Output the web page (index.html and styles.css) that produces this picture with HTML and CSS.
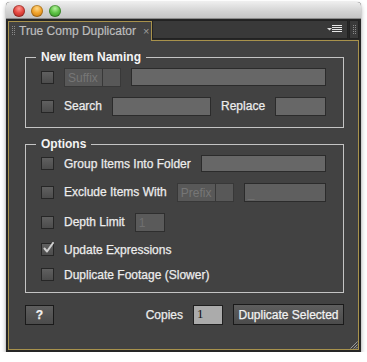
FILE: index.html
```html
<!DOCTYPE html>
<html>
<head>
<meta charset="utf-8">
<link rel="stylesheet" href="styles.css">
</head>
<body>
<div class="window">
  <div class="titlebar">
    <span class="light red"></span>
    <span class="light yellow"></span>
    <span class="light green"></span>
  </div>
  <div class="tabbar">
    <div class="tab">
      <svg class="grip" width="3" height="10" viewBox="0 0 3 10"><g fill="#8a8a8a"><rect x="0" y="0" width="1" height="1"/><rect x="2" y="0" width="1" height="1"/><rect x="0" y="2" width="1" height="1"/><rect x="2" y="2" width="1" height="1"/><rect x="0" y="4" width="1" height="1"/><rect x="2" y="4" width="1" height="1"/><rect x="0" y="6" width="1" height="1"/><rect x="2" y="6" width="1" height="1"/><rect x="0" y="8" width="1" height="1"/><rect x="2" y="8" width="1" height="1"/></g></svg>
      <span class="tab-title">True Comp Duplicator</span>
      <span class="tab-close">×</span>
    </div>
    <div class="strip">
      <svg class="menu-icon" width="15" height="8" viewBox="0 0 15 8"><polygon points="0,3 5,3 2.5,5.5" fill="#dcdcdc"/><g fill="#e6e6e6"><rect x="5" y="0" width="10" height="1"/><rect x="5" y="2" width="10" height="1"/><rect x="5" y="4" width="10" height="1"/><rect x="5" y="6" width="10" height="1"/></g></svg>
    </div>
    <div class="strip-grip">
      <svg width="3" height="10" viewBox="0 0 3 10"><g fill="#8a8a8a"><rect x="0" y="0" width="1" height="1"/><rect x="2" y="0" width="1" height="1"/><rect x="0" y="2" width="1" height="1"/><rect x="2" y="2" width="1" height="1"/><rect x="0" y="4" width="1" height="1"/><rect x="2" y="4" width="1" height="1"/><rect x="0" y="6" width="1" height="1"/><rect x="2" y="6" width="1" height="1"/><rect x="0" y="8" width="1" height="1"/><rect x="2" y="8" width="1" height="1"/></g></svg>
    </div>
  </div>
  <div class="panel">
    <fieldset class="group">
      <legend>New Item Naming</legend>
      <div class="row row-naming">
        <span class="check"></span>
        <span class="select"><span class="select-text">Suffix</span><span class="select-btn"></span></span>
        <span class="field field-grow field-18"></span>
      </div>
      <div class="row row-search">
        <span class="check"></span>
        <span class="label">Search</span>
        <span class="field field-search"></span>
        <span class="label label-replace">Replace</span>
        <span class="field field-grow"></span>
      </div>
    </fieldset>
    <fieldset class="group group-options">
      <legend>Options</legend>
      <div class="row row-folder">
        <span class="check"></span>
        <span class="label">Group Items Into Folder</span>
        <span class="field field-grow field-17"></span>
      </div>
      <div class="row row-exclude">
        <span class="check"></span>
        <span class="label">Exclude Items With</span>
        <span class="select"><span class="select-text">Prefix</span><span class="select-btn"></span></span>
        <span class="field field-grow field-dim"><span class="field-ghost">_</span></span>
      </div>
      <div class="row row-depth">
        <span class="check"></span>
        <span class="label">Depth Limit</span>
        <span class="field field-depth field-dim"><span class="field-ghost">1</span></span>
      </div>
      <div class="row row-check">
        <span class="check checked"><svg width="13" height="13" viewBox="0 0 13 13"><path d="M2.5 6.5 L5 9.5 L11 1" fill="none" stroke="#cfcfcf" stroke-width="2" stroke-linecap="round" stroke-linejoin="round"/></svg></span>
        <span class="label">Update Expressions</span>
      </div>
      <div class="row row-check">
        <span class="check"></span>
        <span class="label">Duplicate Footage (Slower)</span>
      </div>
    </fieldset>
    <div class="footer">
      <span class="button button-help">?</span>
      <span class="label label-copies">Copies</span>
      <span class="copies-field">1</span>
      <span class="button button-dup">Duplicate Selected</span>
    </div>
    <svg class="resize" width="8" height="8" viewBox="0 0 8 8"><g stroke="#9a9a9a" stroke-width="1"><line x1="7.5" y1="0.5" x2="0.5" y2="7.5"/><line x1="7.5" y1="3.5" x2="3.5" y2="7.5"/><line x1="7.5" y1="6" x2="6" y2="7.5"/></g></svg>
  </div>
</div>
</body>
</html>
```

FILE: styles.css
```css
* { box-sizing: border-box; }
html, body { margin: 0; padding: 0; background: #ffffff; }
body {
  font-family: "Liberation Sans", Arial, sans-serif;
  font-size: 12px;
  line-height: 14px;
}
.window {
  margin: 2px 0 0 6px;
  width: 355px;
  background: #262626;
  border-radius: 4px 4px 0 0;
  box-shadow: 0 3px 5px rgba(0,0,0,0.35), 0 0 1px rgba(0,0,0,0.4);
  padding-bottom: 2px;
}
.titlebar {
  height: 17px;
  border-radius: 4px 4px 0 0;
  background: linear-gradient(#ededed, #d2d2d2 60%, #c4c4c4);
  border-bottom: 1px solid #8a8a8a;
  display: flex;
  align-items: center;
  gap: 6px;
  padding: 1px 0 0 7px;
}
.light {
  width: 12px;
  height: 12px;
  border-radius: 50%;
  box-shadow: inset 0 0 0 1px rgba(0,0,0,0.25);
}
.red { background: radial-gradient(circle at 50% 30%, #ff9a93 0%, #e4473f 45%, #b0231c 100%); }
.yellow { background: radial-gradient(circle at 50% 30%, #ffd98a 0%, #f0a22a 45%, #c0700e 100%); }
.green { background: radial-gradient(circle at 50% 30%, #b8f29f 0%, #5cc244 45%, #2f8a1e 100%); }

.tabbar {
  display: flex;
  align-items: flex-start;
  height: 21px;
  padding: 0 2px;
}
.tab {
  position: relative;
  z-index: 1;
  margin-top: 2px;
  width: 144px;
  height: 20px;
  background: #424242;
  border: 1px solid #a8924c;
  border-bottom: none;
  display: flex;
  align-items: center;
  padding: 0 0 1px 3px;
}
.grip { flex: none; }
.tab-title {
  margin-left: 4px;
  color: #bdbdbd;
  font-size: 12px;
  white-space: nowrap;
  -webkit-text-stroke: 0.2px #bdbdbd;
}
.tab-close {
  margin-left: 7px;
  color: #9c9c9c;
  font-size: 11px;
}
.strip {
  margin-top: 1px;
  flex: 1;
  height: 19px;
  background: #393939;
  border: 1px solid #222222;
  display: flex;
  align-items: center;
  justify-content: flex-end;
  padding-right: 5px;
}
.menu-icon { margin-top: -1px; }
.strip-grip {
  margin: 1px 0 0 1px;
  width: 10px;
  height: 19px;
  background: #393939;
  border: 1px solid #222222;
  display: flex;
  align-items: center;
  justify-content: center;
}

.panel {
  position: relative;
  margin: 0 2px;
  background: #424242;
  border: 1px solid #a8924c;
  padding: 9px 14px 23px 16px;
  height: 310px;
}
.group {
  margin: 0;
  min-width: 0;
  border: 1px solid #c4c4c4;
  padding: 4px 17px 11px 15px;
}
.group-options { margin-top: 9px; padding-bottom: 10px; }
legend {
  margin-left: -5px;
  padding: 0 5px;
  color: #f4f4f4;
  font-weight: bold;
  font-size: 12px;
  line-height: 14px;
}
.row {
  display: flex;
  align-items: center;
  gap: 10px;
  height: 20px;
  margin-top: 10px;
}
.row:first-of-type { margin-top: 0; }
.row-naming { height: 18px; }
.row-folder { height: 17px; }
.row-check { height: 15px; }
.label {
  color: #ececec;
  white-space: nowrap;
  -webkit-text-stroke: 0.25px #ececec;
}
.check {
  flex: none;
  width: 13px;
  height: 13px;
  border: 1px solid #262626;
  background: linear-gradient(#606060, #4c4c4c);
  position: relative;
}
.check svg {
  position: absolute;
  left: 0;
  top: -2px;
}
.select {
  flex: none;
  display: flex;
  width: 57px;
  height: 19px;
  border: 1px solid #383838;
  background: #585858;
}
.select-text {
  flex: 1;
  color: #767676;
  padding: 2px 0 0 3px;
  line-height: 14px;
}
.select-btn {
  width: 18px;
  border-left: 1px solid #383838;
}
.field {
  display: block;
  height: 19px;
  border: 1px solid #2b2b2b;
  background: #676767;
}
.field-grow { flex: 1; }
.field-18 { height: 18px; }
.field-17 { height: 17px; }
.field-search { width: 99px; flex: none; }
.label-replace { margin-left: 0; }
.field-dim { background: #5f5f5f; }
.field-depth { width: 30px; flex: none; background: #5a5a5a; border-color: #2e2e2e; }
.field-ghost {
  display: block;
  color: #707070;
  padding: 2px 0 0 3px;
}

.footer {
  display: flex;
  align-items: center;
  gap: 10px;
  height: 21px;
  margin-top: 11px;
}
.button {
  height: 20px;
  border: 1px solid #1a1a1a;
  background: linear-gradient(#5e5e5e, #4b4b4b);
  color: #f2f2f2;
  display: flex;
  align-items: center;
  justify-content: center;
  white-space: nowrap;
  -webkit-text-stroke: 0.25px #f2f2f2;
}
.button-help { width: 29px; font-weight: bold; }
.label-copies { margin-left: auto; }
.copies-field {
  width: 30px;
  height: 20px;
  border: 1px solid #1f1f1f;
  background: #ababab;
  color: #111111;
  font-family: "Liberation Serif", "Times New Roman", serif;
  font-size: 13px;
  line-height: 13px;
  padding: 1px 0 0 3px;
}
.button-dup { width: 111px; height: 21px; }
.resize {
  position: absolute;
  right: 0;
  bottom: 0;
}
```
